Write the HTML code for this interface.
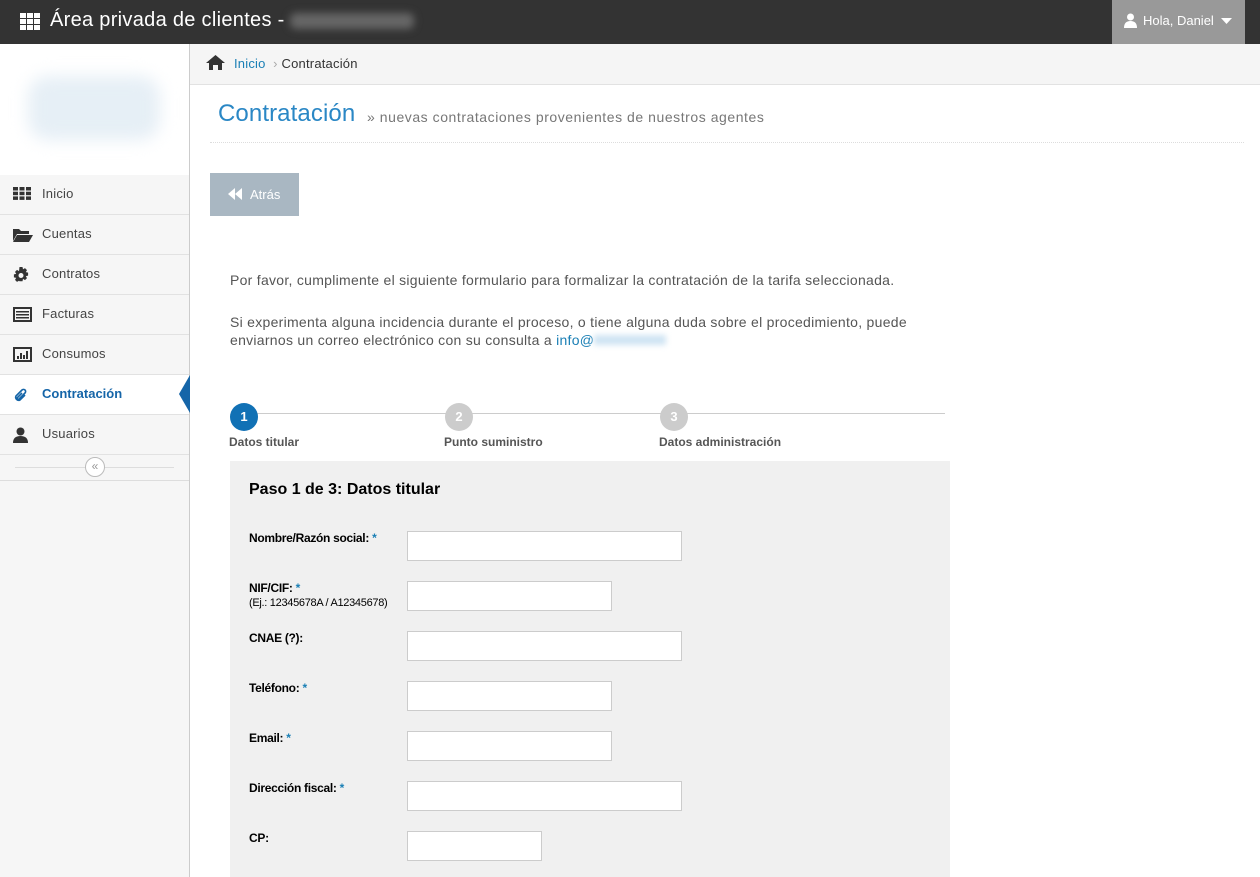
<!DOCTYPE html>
<html><head><meta charset="utf-8"><style>
*{box-sizing:border-box;margin:0;padding:0}
body{width:1260px;height:877px;overflow:hidden;font-family:"Liberation Sans",sans-serif;background:#fff;position:relative;font-size:13px}
.abs{position:absolute}
#top{left:0;top:0;width:1260px;height:44px;background:#333}
#side{left:0;top:44px;width:190px;height:833px;background:#f6f6f6;border-right:1px solid #ccc}
.mi{position:absolute;left:0;width:189px;height:40px;border-bottom:1px solid #e2e2e2;color:#444;font-size:13px;line-height:37px;padding-left:42px;letter-spacing:0.2px}
.mi svg{position:absolute;left:13px;top:12px}
.lbl{position:absolute;left:249px;font-size:12px;font-weight:bold;color:#000;letter-spacing:-0.3px}
.lbl b{color:#1a7fb5}
.inp{position:absolute;left:407px;height:30px;background:#fff;border:1px solid #ccc}
</style></head><body>
<div id="top" class="abs">
  <svg class="abs" style="left:20px;top:13px" width="20" height="17" viewBox="0 0 20 17" fill="#fff"><rect x="0" y="0" width="6" height="5"/><rect x="7" y="0" width="6" height="5"/><rect x="14" y="0" width="6" height="5"/><rect x="0" y="6" width="6" height="5"/><rect x="7" y="6" width="6" height="5"/><rect x="14" y="6" width="6" height="5"/><rect x="0" y="12" width="6" height="5"/><rect x="7" y="12" width="6" height="5"/><rect x="14" y="12" width="6" height="5"/></svg>
  <div class="abs" style="left:50px;top:9px;color:#fff;font-size:20px;letter-spacing:0.3px">Área privada de clientes -</div>
  <div class="abs" style="left:290px;top:13px;width:124px;height:16px;background:#666;filter:blur(4px);border-radius:6px"></div>
  <div class="abs" style="left:1112px;top:0;width:133px;height:44px;background:#999;color:#fff;font-size:13px;line-height:42px;padding-left:31px">Hola, Daniel
    <svg class="abs" style="left:12px;top:13px" width="13" height="15" viewBox="0 0 13 15" fill="#fff"><circle cx="6.5" cy="4" r="3.5"/><path d="M0 15 Q0 8 6.5 8 Q13 8 13 15Z"/></svg>
    <svg class="abs" style="left:109px;top:18px" width="11" height="6" viewBox="0 0 11 6" fill="#fff"><path d="M0 0H11L5.5 6Z"/></svg>
  </div>
</div>
<div id="side" class="abs">
  <div class="abs" style="left:0;top:0;width:189px;height:131px;background:#fff"></div>
  <div class="abs" style="left:28px;top:32px;width:132px;height:64px;background:#e6eff6;filter:blur(8px);border-radius:20px"></div>
</div>
<div class="mi" style="top:175px"><svg width="18" height="13" viewBox="0 0 18 13" fill="#333"><rect x="0" y="0" width="5" height="3.5"/><rect x="6.5" y="0" width="5" height="3.5"/><rect x="13" y="0" width="5" height="3.5"/><rect x="0" y="4.7" width="5" height="3.5"/><rect x="6.5" y="4.7" width="5" height="3.5"/><rect x="13" y="4.7" width="5" height="3.5"/><rect x="0" y="9.4" width="5" height="3.5"/><rect x="6.5" y="9.4" width="5" height="3.5"/><rect x="13" y="9.4" width="5" height="3.5"/></svg>Inicio</div>
<div class="mi" style="top:215px"><svg width="20" height="15" viewBox="0 0 20 15" fill="#333"><path d="M0 2h6l2 2h8v3H4L0 14Z"/><path d="M4 8h16l-4 7H0Z"/></svg>Cuentas</div>
<div class="mi" style="top:255px"><svg width="16" height="16" viewBox="0 0 16 16" fill="#333"><path d="M6.5 0h3l.5 2.3 2-1.2 2 2-1.2 2 2.3.5v3l-2.3.5 1.2 2-2 2-2-1.2-.5 2.3h-3L6 13.7l-2 1.2-2-2 1.2-2L.9 10.4v-3l2.3-.5-1.2-2 2-2 2 1.2Z"/><circle cx="8" cy="8.5" r="2.5" fill="#f6f6f6"/></svg>Contratos</div>
<div class="mi" style="top:295px"><svg width="19" height="15" viewBox="0 0 19 15"><rect x="1" y="1" width="17" height="13" fill="none" stroke="#333" stroke-width="2"/><rect x="3" y="4" width="13" height="1.5" fill="#333"/><rect x="3" y="7" width="13" height="1.5" fill="#333"/><rect x="3" y="10" width="13" height="1.5" fill="#333"/></svg>Facturas</div>
<div class="mi" style="top:335px"><svg width="19" height="15" viewBox="0 0 19 15"><rect x="1" y="1" width="17" height="13" fill="none" stroke="#333" stroke-width="2"/><rect x="4" y="9" width="2" height="3" fill="#333"/><rect x="7" y="6" width="2" height="6" fill="#333"/><rect x="10" y="8" width="2" height="4" fill="#333"/><rect x="13" y="4" width="2" height="8" fill="#333"/></svg>Consumos</div>
<div class="mi" style="top:375px;background:#fff;color:#1565a8;font-weight:bold;letter-spacing:0"><svg width="16" height="16" viewBox="0 0 16 16"><path d="M12 8 7 13a3 3 0 0 1-4-4l6-6a2 2 0 0 1 3 3l-6 6a1 1 0 0 1-1.5-1.5L9 6" fill="none" stroke="#1565a8" stroke-width="1.6"/></svg>Contratación</div>
<svg class="abs" style="left:179px;top:375px" width="11" height="38" viewBox="0 0 11 38"><path d="M11 0V38L0 19Z" fill="#1565a8"/></svg>
<div class="mi" style="top:415px"><svg width="15" height="16" viewBox="0 0 15 16" fill="#333"><circle cx="7.5" cy="4.5" r="4"/><path d="M0 16Q0 9 7.5 9Q15 9 15 16Z"/></svg>Usuarios</div>
<div class="abs" style="left:0;top:455px;width:189px;height:26px;border-bottom:1px solid #ddd"></div>
<div class="abs" style="left:15px;top:467px;width:159px;height:1px;background:#ddd"></div>
<div class="abs" style="left:85px;top:457px;width:20px;height:20px;border:1px solid #bbb;border-radius:50%;background:#fff;color:#999;font-size:12px;line-height:17px;text-align:center">«</div>

<div class="abs" style="left:190px;top:44px;width:1070px;height:41px;background:#f5f5f5;border-bottom:1px solid #e2e2e2"></div>
<svg class="abs" style="left:206px;top:55px" width="19" height="15" viewBox="0 0 19 15" fill="#333"><path d="M9.5 0 19 8h-3v7h-4v-5H7v5H3V8H0Z"/></svg>
<div class="abs" style="left:234px;top:56px;font-size:13px;color:#1a7fb5;letter-spacing:0.2px">Inicio <span style="color:#aaa">&nbsp;›&nbsp;</span><span style="color:#333">Contratación</span></div>
<div class="abs" style="left:218px;top:100px;font-size:24px;color:#2a87c5;letter-spacing:0.1px">Contratación</div>
<div class="abs" style="left:367px;top:109px;font-size:14px;color:#777;letter-spacing:0.55px">» nuevas contrataciones provenientes de nuestros agentes</div>
<div class="abs" style="left:210px;top:142px;width:1034px;border-top:1px dotted #ddd"></div>
<div class="abs" style="left:210px;top:173px;width:89px;height:43px;background:#a9b7c2;color:#fff;font-size:13px;line-height:43px;padding-left:40px">Atrás
  <svg class="abs" style="left:18px;top:15px" width="14" height="12" viewBox="0 0 14 12" fill="#fff"><path d="M7 0V12L0 6Z"/><path d="M14 0V12L7 6Z"/></svg></div>
<div class="abs" style="left:230px;top:271px;font-size:14px;color:#555;line-height:18px;letter-spacing:0.28px;white-space:nowrap">Por favor, cumplimente el siguiente formulario para formalizar la contratación de la tarifa seleccionada.</div>
<div class="abs" style="left:230px;top:313px;font-size:14px;color:#555;line-height:18px;width:720px;letter-spacing:0.28px">Si experimenta alguna incidencia durante el proceso, o tiene alguna duda sobre el procedimiento, puede<br>enviarnos un correo electrónico con su consulta a <span style="color:#1a7fb5">info@</span><span style="display:inline-block;width:72px;height:10px;background:#cfe4f3;filter:blur(3px)"></span></div>

<div class="abs" style="left:244px;top:413px;width:701px;height:1px;background:#ccc"></div>
<div class="abs" style="left:230px;top:403px;width:28px;height:28px;border-radius:50%;background:#1171b5;color:#fff;font-weight:bold;text-align:center;line-height:28px;font-size:13px">1</div>
<div class="abs" style="left:445px;top:403px;width:28px;height:28px;border-radius:50%;background:#ccc;color:#fff;font-weight:bold;text-align:center;line-height:28px;font-size:13px">2</div>
<div class="abs" style="left:660px;top:403px;width:28px;height:28px;border-radius:50%;background:#ccc;color:#fff;font-weight:bold;text-align:center;line-height:28px;font-size:13px">3</div>
<div class="abs" style="left:229px;top:435px;font-size:12px;font-weight:bold;color:#555">Datos titular</div>
<div class="abs" style="left:444px;top:435px;font-size:12px;font-weight:bold;color:#555">Punto suministro</div>
<div class="abs" style="left:659px;top:435px;font-size:12px;font-weight:bold;color:#555">Datos administración</div>

<div class="abs" style="left:230px;top:461px;width:720px;height:416px;background:#f0f0f0"></div>
<div class="abs" style="left:249px;top:481px;font-size:16px;font-weight:bold;color:#000">Paso 1 de 3: Datos titular</div>
<div class="lbl" style="top:531px">Nombre/Razón social: <b>*</b></div><div class="inp" style="top:531px;width:275px"></div>
<div class="lbl" style="top:581px">NIF/CIF: <b>*</b><br><span style="font-weight:normal;font-size:11px">(Ej.: 12345678A / A12345678)</span></div><div class="inp" style="top:581px;width:205px"></div>
<div class="lbl" style="top:631px">CNAE (?):</div><div class="inp" style="top:631px;width:275px"></div>
<div class="lbl" style="top:681px">Teléfono: <b>*</b></div><div class="inp" style="top:681px;width:205px"></div>
<div class="lbl" style="top:731px">Email: <b>*</b></div><div class="inp" style="top:731px;width:205px"></div>
<div class="lbl" style="top:781px">Dirección fiscal: <b>*</b></div><div class="inp" style="top:781px;width:275px"></div>
<div class="lbl" style="top:831px">CP:</div><div class="inp" style="top:831px;width:135px"></div>
</body></html>
